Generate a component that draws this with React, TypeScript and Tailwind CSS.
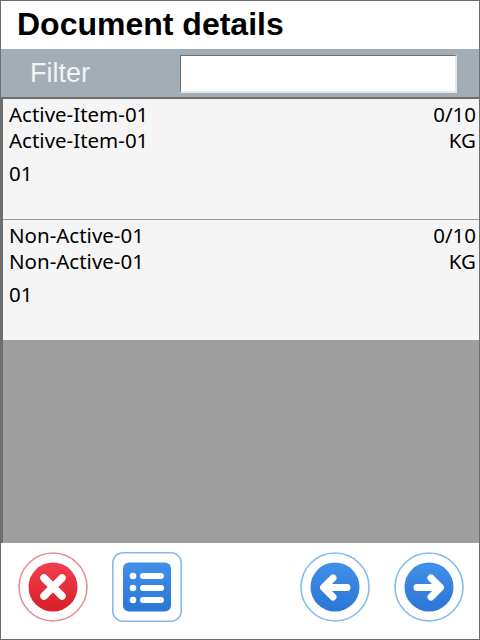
import React from 'react';

type Row = { name: string; qty: string; unit: string; code: string };

const rows: Row[] = [
  { name: 'Active-Item-01', qty: '0/10', unit: 'KG', code: '01' },
  { name: 'Non-Active-01', qty: '0/10', unit: 'KG', code: '01' },
];

function ItemRow({ row }: { row: Row }) {
  return (
    <div className="h-[121px] shrink-0 border-b border-[#9a9a9a] bg-[#f5f5f5] pl-[6px] pr-[3px] pt-[2px] font-['Noto_Sans',sans-serif] text-[20.5px] leading-[26px] text-black last:h-[120px] last:border-b-0">
      <div className="flex justify-between">
        <span>{row.name}</span>
        <span>{row.qty}</span>
      </div>
      <div className="flex justify-between">
        <span>{row.name}</span>
        <span>{row.unit}</span>
      </div>
      <div className="mt-[7px]">{row.code}</div>
    </div>
  );
}

function CloseButton() {
  return (
    <svg width="70" height="70" viewBox="0 0 70 70">
      <defs>
        <linearGradient id="red" x1="0" y1="0" x2="0" y2="1">
          <stop offset="0" stopColor="#f0404f" />
          <stop offset="1" stopColor="#d81e2a" />
        </linearGradient>
      </defs>
      <circle cx="35" cy="35" r="34" fill="#fff" stroke="#ea8f95" strokeWidth="1.6" />
      <circle cx="35" cy="35" r="24.5" fill="url(#red)" />
      <path d="M26 26 L44 44 M44 26 L26 44" stroke="#fff" strokeWidth="7.5" strokeLinecap="round" />
    </svg>
  );
}

function ListButton() {
  return (
    <svg width="70" height="70" viewBox="0 0 70 70">
      <defs>
        <linearGradient id="blue1" x1="0" y1="0" x2="0" y2="1">
          <stop offset="0" stopColor="#4190e8" />
          <stop offset="1" stopColor="#2b76d6" />
        </linearGradient>
      </defs>
      <rect x="0.8" y="0.8" width="68.4" height="68.4" rx="10" fill="#fff" stroke="#85bbec" strokeWidth="1.6" />
      <rect x="11" y="10.5" width="48" height="49" rx="6" fill="url(#blue1)" />
      <circle cx="21" cy="24" r="3.3" fill="#fff" />
      <circle cx="21" cy="36" r="3.3" fill="#fff" />
      <circle cx="21" cy="48" r="3.3" fill="#fff" />
      <path d="M31 24 H49 M31 36 H49 M31 48 H49" stroke="#fff" strokeWidth="6" strokeLinecap="round" />
    </svg>
  );
}

function ArrowButton({ dir }: { dir: 'left' | 'right' }) {
  const d = dir === 'left' ? 'M47 35.5 H24 M33 26 L23.5 35.5 L33 45' : 'M23 35.5 H46 M37 26 L46.5 35.5 L37 45';
  return (
    <svg width="70" height="70" viewBox="0 0 70 70">
      <defs>
        <linearGradient id={`arrow-${dir}`} x1="0" y1="0" x2="0" y2="1">
          <stop offset="0" stopColor="#4190e8" />
          <stop offset="1" stopColor="#2b76d6" />
        </linearGradient>
      </defs>
      <circle cx="35" cy="35" r="34" fill="#fff" stroke="#85bbec" strokeWidth="1.6" />
      <circle cx="35" cy="35" r="24.5" fill={`url(#arrow-${dir})`} />
      <path d={d} fill="none" stroke="#fff" strokeWidth="7" strokeLinecap="round" strokeLinejoin="round" />
    </svg>
  );
}

export default function App() {
  return (
    <div className="flex h-[640px] w-[480px] flex-col overflow-hidden border border-[#6e6e6e] bg-white font-['Liberation_Sans',sans-serif]">
      {/* Title */}
      <div className="flex h-[46px] shrink-0 items-center pl-[16px] text-[32px] font-bold text-black">
        Document details
      </div>

      {/* Filter */}
      <div className="mt-[2px] flex h-[48px] shrink-0 items-center bg-[#a2adb5] pl-[29px]">
        <span className="w-[150px] text-[27px] text-[#f2f4f5]">Filter</span>
        <div className="mt-[2px] h-[38px] w-[277px] border border-b-2 border-r-2 border-[#6f6f6f] border-r-[#e8e8e8] border-b-[#e8e8e8] bg-white" />
      </div>

      {/* Items */}
      <div className="flex min-h-0 flex-1 flex-col border-t-2 border-l-2 border-[#6e6e6e] bg-[#9e9e9e]">
        {rows.map((row) => (
          <ItemRow key={row.name} row={row} />
        ))}
      </div>

      {/* Footer buttons */}
      <div className="flex h-[96px] shrink-0 items-center pb-[8px] pl-[17px] pr-[15px]">
        <CloseButton />
        <div className="ml-[24px]">
          <ListButton />
        </div>
        <div className="ml-auto flex gap-[24px]">
          <ArrowButton dir="left" />
          <ArrowButton dir="right" />
        </div>
      </div>
    </div>
  );
}
